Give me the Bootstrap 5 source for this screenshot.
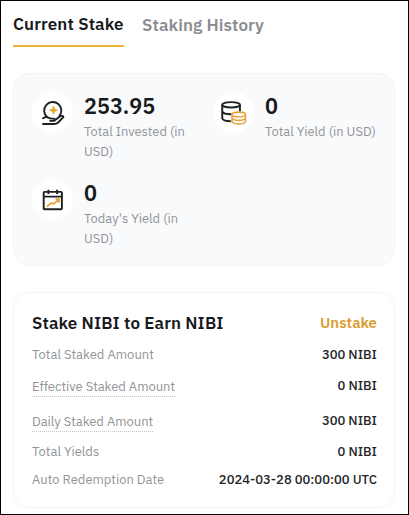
<!DOCTYPE html>
<html lang="en">
<head>
<meta charset="utf-8">
<meta name="viewport" content="width=device-width, initial-scale=1">
<title>Staking</title>
<link href="https://cdn.jsdelivr.net/npm/bootstrap@5.3.0/dist/css/bootstrap.min.css" rel="stylesheet">
<style>
body{font-family:"IBM Plex Sans","Noto Sans",sans-serif;color:#18191b;background:#fff;height:515px;overflow:hidden}
.screen{height:515px;border:1px solid #000;padding:0 13px 0 12px}
.tabs{height:46px;gap:18px}
.tab-item{font-size:17px;line-height:24px;font-weight:600;color:#8b8d91;padding:12px 0 0;height:46px;white-space:nowrap;letter-spacing:.1px}
.tab-item.active{color:#18191b;border-bottom:2px solid #e9b636;padding-top:11px;width:111px;letter-spacing:.14px}
.panel{border:1px solid #f3f5f6;border-radius:16px}
.summary{background:#f9fafc;margin-top:26px;height:193px;padding:18px 0 0 18px}
.stat{height:87px;gap:10px}
.stat-l{width:181px}
.disc{width:41px;height:41px;border-radius:50%;background:#fff;flex:none}
.figure-num{font-size:21.6px;line-height:28px;font-weight:600;padding-left:1px}
.caption-t{font-size:12.95px;line-height:20px;color:#929498;white-space:nowrap;margin-top:2px;padding-left:1px}
.stake{margin-top:26px;height:216px;padding:17px 17px 0 18px}
.title-t{font-size:17px;line-height:26px;font-weight:600;letter-spacing:.12px}
.unstake{font-size:15px;line-height:26px;font-weight:600;color:#dc9c2f;text-decoration:none}
.line{font-size:13px;line-height:18px;color:#929498;white-space:nowrap}
.line b{font-weight:500;color:#242528;font-size:13px}
.tip{border-bottom:1px dotted #c4c5c8;margin-top:1px;letter-spacing:-.03px}
.gap-first{margin-top:10px}
.gap-tip{margin-top:13px}
.gap-wide{margin-top:15px}
.gap-mid{margin-top:11px}
.gap-last{margin-top:10px}
</style>
<script src="https://cdn.jsdelivr.net/npm/bootstrap@5.3.0/dist/js/bootstrap.bundle.min.js"></script>
</head>
<body>
<main class="screen">
  <div class="tabs d-flex">
    <div role="button" class="tab-item active"><span>Current Stake</span></div>
    <div role="button" class="tab-item"><span>Staking History</span></div>
  </div>
  <section class="panel summary">
    <div class="d-flex">
      <div class="stat stat-l d-flex">
        <div class="disc d-flex align-items-center justify-content-center">
          <svg width="24" height="26" viewBox="0 0 24 26" fill="none" stroke="#202124" stroke-width="1.9" stroke-linecap="round" stroke-linejoin="round"><path d="M6.2 17.2A8.6 8.6 0 1 1 18.3 16.2"/><path d="M2 18.3Q5 16.2 8 17.8L10 18.6H13.2Q15 20.6 12.6 20.9H9.2M14.5 19.8L19.6 16Q22 15.2 22.4 17.2L17.2 22.5Q15.6 24 13 24H2"/><path d="M12.5 6.3L13.7 9L16.4 10.2L13.7 11.4L12.5 14.1L11.3 11.4L8.6 10.2L11.3 9Z" fill="#e9a82b" stroke="#e9a82b" stroke-width=".7"/></svg>
        </div>
        <div><div class="figure-num"><span>253.95</span></div><div class="caption-t"><span>Total Invested (in</span><br>USD)</div></div>
      </div>
      <div class="stat d-flex">
        <div class="disc d-flex align-items-center justify-content-center">
          <svg width="27" height="25" viewBox="0 0 28 26" fill="none" stroke="#202124" stroke-width="2"><ellipse cx="11.5" cy="5" rx="9.2" ry="2.8"/><path d="M2.3 5V19Q3 22 11.5 22.2M20.7 5V12M2.3 12Q4 15 12 14.8"/><g stroke="#e9a13a" stroke-width="1.6"><ellipse cx="19.5" cy="15" rx="7" ry="2.4" fill="#fff"/><path d="M12.5 15V22.5Q14 25 19.5 25T26.5 22.5V15M12.5 18.8Q14 21.2 19.5 21.2T26.5 18.8"/></g></svg>
        </div>
        <div><div class="figure-num"><span>0</span></div><div class="caption-t"><span>Total Yield (in USD)</span></div></div>
      </div>
    </div>
    <div class="stat d-flex">
      <div class="disc d-flex align-items-center justify-content-center">
        <svg width="23" height="23" viewBox="0 0 24 24" fill="none" stroke="#202124" stroke-width="2" stroke-linejoin="round"><rect x="2.8" y="4" width="19" height="18.2" rx=".8"/><path d="M3 9H21.6M7.8 1.7V6.2M16.8 1.7V6.2"/><path d="M6 19.5L10.5 15.7L13.3 16.5L18.6 12M15.2 11.7H18.9V15.2" stroke="#e9a13a" stroke-width="1.8"/></svg>
      </div>
      <div><div class="figure-num"><span>0</span></div><div class="caption-t"><span>Today's Yield (in</span><br>USD)</div></div>
    </div>
  </section>
  <section class="panel stake">
    <div class="d-flex justify-content-between"><span class="title-t">Stake NIBI to Earn NIBI</span><a class="unstake" href="#">Unstake</a></div>
    <div class="line gap-first d-flex justify-content-between"><span>Total Staked Amount</span><b>300 NIBI</b></div>
    <div class="line gap-tip d-flex justify-content-between"><span class="tip">Effective Staked Amount</span><b>0 NIBI</b></div>
    <div class="line gap-wide d-flex justify-content-between"><span class="tip">Daily Staked Amount</span><b>300 NIBI</b></div>
    <div class="line gap-mid d-flex justify-content-between"><span>Total Yields</span><b>0 NIBI</b></div>
    <div class="line gap-last d-flex justify-content-between"><span>Auto Redemption Date</span><b>2024-03-28 00:00:00 UTC</b></div>
  </section>
</main>
</body>
</html>
